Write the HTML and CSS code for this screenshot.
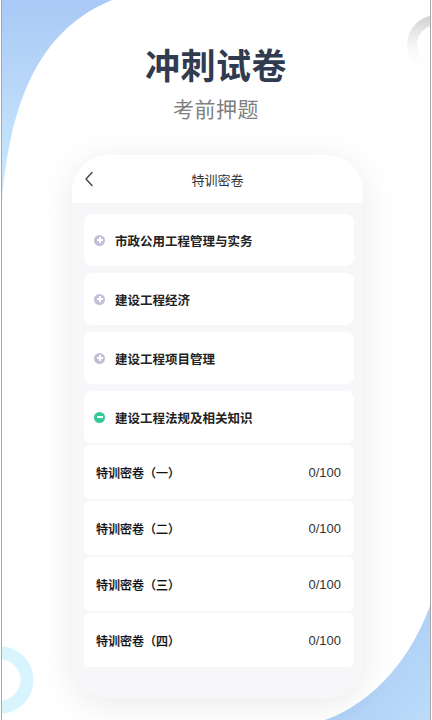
FILE: index.html
```html
<!DOCTYPE html>
<html lang="zh-CN">

<head>
  <meta charset="UTF-8">
  <meta name="viewport" content="width=device-width, initial-scale=1.0">
  <title>冲刺试卷</title>
  <link rel="stylesheet" href="styles.css">
</head>

<body>
  <div class="page">
    <!-- decorative background -->
    <svg class="bg" width="428" height="720" viewBox="2 0 428 720">
      <defs>
        <linearGradient id="blueTop" x1="0" y1="0" x2="0" y2="1">
          <stop offset="0" stop-color="#a9c9f6" />
          <stop offset="1" stop-color="#d3f1fd" />
        </linearGradient>
        <linearGradient id="blueBottom" x1="0" y1="0" x2="1" y2="1">
          <stop offset="0" stop-color="#a3c3f3" />
          <stop offset="1" stop-color="#bcdcfa" />
        </linearGradient>
        <linearGradient id="grayRing" x1="0" y1="0" x2="0" y2="1">
          <stop offset="0" stop-color="#d6d6d6" />
          <stop offset="1" stop-color="#ffffff" stop-opacity="0" />
        </linearGradient>
      </defs>
      <path d="M0 0 L112 0 C40 30 5 100 0 235 Z" fill="url(#blueTop)" />
      <path d="M432 600 C415 650 380 700 325 720 L432 720 Z" fill="url(#blueBottom)" />
      <circle cx="437" cy="45" r="25" fill="none" stroke="url(#grayRing)" stroke-width="10" />
      <circle cx="0" cy="680" r="27" fill="none" stroke="#d8f5fd" stroke-width="13" />
    </svg>

    <header class="hero">
      <h1>冲刺试卷</h1>
      <p>考前押题</p>
    </header>

    <div class="phone">
      <div class="phone-bar">
        <svg class="back" width="10" height="16" viewBox="0 0 10 16">
          <path d="M8 1.5 L2 8 L8 14.5" fill="none" stroke="#444" stroke-width="1.4" stroke-linecap="round" stroke-linejoin="round" />
        </svg>
        <span class="bar-title">特训密卷</span>
      </div>

      <div class="phone-body">
        <div class="subject">
          <span class="toggle plus"></span>
          <span class="subject-name">市政公用工程管理与实务</span>
        </div>
        <div class="subject">
          <span class="toggle plus"></span>
          <span class="subject-name">建设工程经济</span>
        </div>
        <div class="subject">
          <span class="toggle plus"></span>
          <span class="subject-name">建设工程项目管理</span>
        </div>
        <div class="subject">
          <span class="toggle minus"></span>
          <span class="subject-name">建设工程法规及相关知识</span>
        </div>

        <div class="paper">
          <span class="paper-name">特训密卷（一）</span>
          <span class="paper-score">0/100</span>
        </div>
        <div class="paper">
          <span class="paper-name">特训密卷（二）</span>
          <span class="paper-score">0/100</span>
        </div>
        <div class="paper">
          <span class="paper-name">特训密卷（三）</span>
          <span class="paper-score">0/100</span>
        </div>
        <div class="paper">
          <span class="paper-name">特训密卷（四）</span>
          <span class="paper-score">0/100</span>
        </div>
      </div>
    </div>
  </div>
</body>

</html>
```

FILE: styles.css
```css
html,
body {
  margin: 0;
  padding: 0;
  height: 100%;
  overflow: hidden;
  background: #fff;
  font-family: "Noto Sans CJK SC", "Noto Sans", sans-serif;
}

.page {
  position: relative;
  width: 428px;
  height: 720px;
  margin-left: 1px;
  border-left: 1px solid #a8a8a8;
  border-right: 1px solid #a8a8a8;
  overflow: hidden;
}

.bg {
  position: absolute;
  left: 0;
  top: 0;
  z-index: 0;
}

.hero {
  position: relative;
  z-index: 1;
  display: flex;
  flex-direction: column;
  align-items: center;
  padding-top: 44px;
}

.hero h1 {
  margin: 0;
  font-size: 35px;
  line-height: 40px;
  font-weight: 700;
  letter-spacing: 0.5px;
  color: #313b50;
}

.hero p {
  margin: 12px 0 0;
  font-size: 21px;
  line-height: 24px;
  color: #7f7f7f;
  letter-spacing: 0.5px;
}

/* phone mockup */
.phone {
  position: relative;
  z-index: 1;
  width: 291px;
  height: 543px;
  margin: 35px 0 0 70px;
  border-radius: 36px;
  background: #f7f7f9;
  overflow: hidden;
  box-shadow: 0 6px 36px rgba(0, 0, 0, 0.09);
}

.phone-bar {
  display: grid;
  grid-template-columns: 40px 1fr 40px;
  align-items: center;
  height: 48px;
  background: #fff;
}

.back {
  margin-left: 12px;
}

.bar-title {
  text-align: center;
  font-size: 13px;
  color: #333;
}

.phone-body {
  display: flex;
  flex-direction: column;
  padding: 11px 9px 0 12px;
}

.subject {
  display: flex;
  align-items: center;
  gap: 10px;
  height: 52px;
  margin-bottom: 7px;
  padding-left: 10px;
  background: #fff;
  border-radius: 8px;
}

.subject:nth-child(4) {
  margin-bottom: 2px;
}

.toggle {
  position: relative;
  width: 11px;
  height: 11px;
  border-radius: 50%;
}

.toggle.plus {
  background: #c0c0d8;
}

.toggle.minus {
  background: #33c896;
}

.toggle::before,
.toggle.plus::after {
  content: "";
  position: absolute;
  left: 2.5px;
  top: 4.5px;
  width: 6px;
  height: 2px;
  background: #fff;
}

.toggle.plus::after {
  left: 4.5px;
  top: 2.5px;
  width: 2px;
  height: 6px;
}

.subject-name {
  font-size: 12.5px;
  font-weight: 700;
  color: #222;
}

.paper {
  display: flex;
  align-items: center;
  justify-content: space-between;
  height: 54px;
  margin-bottom: 2px;
  padding: 0 13px 0 12px;
  background: #fff;
  border-radius: 6px;
}

.paper-name {
  font-size: 12px;
  font-weight: 500;
  color: #111;
  -webkit-text-stroke: 0.2px #111;
}

.paper-score {
  font-family: "Liberation Sans", Arial, sans-serif;
  font-size: 13px;
  color: #333;
}
```
